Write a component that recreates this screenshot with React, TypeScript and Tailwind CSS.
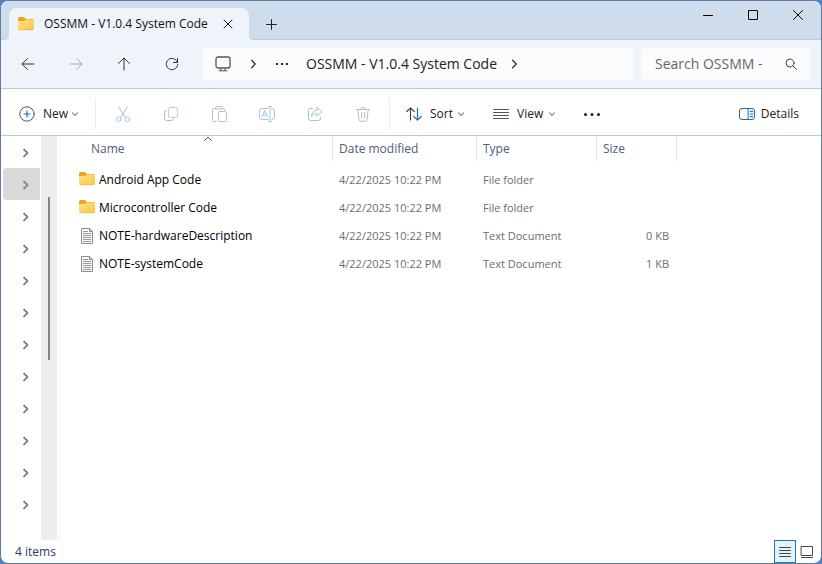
import type { ReactNode } from "react";

type IconProps = { className?: string };

function Svg({ size = 16, className = "", children }: { size?: number; className?: string; children: ReactNode }) {
  return (
    <svg
      width={size}
      height={size}
      viewBox={`0 0 ${size} ${size}`}
      fill="none"
      stroke="currentColor"
      strokeLinecap="round"
      strokeLinejoin="round"
      aria-hidden="true"
      className={`shrink-0 ${className}`}
    >
      {children}
    </svg>
  );
}

function FolderIcon({ className = "" }: IconProps) {
  return (
    <svg width="16" height="16" viewBox="0 0 16 16" aria-hidden="true" className={`shrink-0 ${className}`}>
      <defs>
        <linearGradient id="folderFront" x1="0" y1="0" x2="1" y2="1">
          <stop offset="0" stopColor="#ffe38f" />
          <stop offset="1" stopColor="#fbc740" />
        </linearGradient>
      </defs>
      <path d="M0 2.500Q0 1 1.500 1H5.200Q6 1 6.500 1.600L7.700 3H14.500Q16 3 16 4.500V9H0Z" fill="#eaa51c" />
      <path d="M0 6Q0 5 1 5H5.500Q6.200 5 6.800 4.500L7.300 4.200Q7.700 3.500 8.200 3.500H14.800Q16 3.500 16 4.700V12.600Q16 14 14.600 14H1.400Q0 14 0 12.600Z" fill="url(#folderFront)" />
      <path d="M.5 13.200Q.9 13.700 1.500 13.700H14.500Q15.200 13.700 15.500 13.200" fill="none" stroke="#e9b12f" strokeWidth=".6" />
    </svg>
  );
}

function TextFileIcon() {
  return (
    <svg width="16" height="16" viewBox="0 0 16 16" aria-hidden="true" className="shrink-0">
      <path d="M2.500 .5H10.500L13.500 3.500V15.500H2.500Z" fill="#fafafa" stroke="#8c8c8c" />
      <path d="M10.500 .5V3.500H13.500" fill="none" stroke="#8c8c8c" />
      <path d="M4 3.500H9M4 5.500H12M4 7.500H12M4 9.500H12M4 11.500H12M4 13.500H12" stroke="#9a9a9a" />
    </svg>
  );
}

function Chevron({ className = "" }: IconProps) {
  return (
    <Svg size={8} className={className}>
      <path d="M1.500 2.800 4 5.300 6.500 2.800" strokeWidth="1.200" />
    </Svg>
  );
}

function ChevronRight({ className = "" }: IconProps) {
  return (
    <Svg size={10} className={className}>
      <path d="M3.500 1.200 7.200 5 3.500 8.800" strokeWidth="1.200" />
    </Svg>
  );
}

function Dots() {
  return (
    <span className="flex gap-[3px]">
      <i className="size-[2px] bg-[#222]" />
      <i className="size-[2px] bg-[#222]" />
      <i className="size-[2px] bg-[#222]" />
    </span>
  );
}

const navIcons = [
  { label: "Back", tone: "text-[#333]", art: <path d="M14 8H2M7.500 2.500 2 8 7.500 13.500" /> },
  { label: "Forward", tone: "text-[#a6a9ad]", art: <path d="M2 8H14M8.500 2.500 14 8 8.500 13.500" /> },
  { label: "Up", tone: "text-[#333]", art: <path d="M8 14V2M2.500 7.500 8 2 13.500 7.500" /> },
  { label: "Refresh", tone: "text-[#333]", art: <path d="M13.500 6.500A5.700 5.700 0 1 0 13.700 8.500M13.500 2.500V6.500H9.500" /> },
];

const fileActions = [
  {
    label: "Cut",
    art: (
      <>
        <path d="M3.500 .8 10.300 11.200M12.500 .8 5.700 11.200" stroke="#b9bcc0" />
        <circle cx="3.700" cy="13.200" r="2.300" stroke="#9cc9e8" />
        <circle cx="12.300" cy="13.200" r="2.300" stroke="#9cc9e8" />
      </>
    ),
  },
  {
    label: "Copy",
    art: (
      <>
        <rect x="5.500" y="1.500" width="9" height="10" rx="2" stroke="#a9d0ea" />
        <path d="M3.500 4.500Q1.500 4.500 1.500 6.500V12Q1.500 14.500 4 14.500H8Q10.500 14.500 10.500 13" stroke="#b9bcc0" />
      </>
    ),
  },
  {
    label: "Paste",
    art: (
      <>
        <path d="M5 2.500H2.500Q1.500 2.500 1.500 3.500V14.500Q1.500 15.500 2.500 15.500H5M11 2.500H12.500Q13.500 2.500 13.500 3.500V4" stroke="#b9bcc0" />
        <rect x="4.500" y=".5" width="7" height="2.500" rx="1.200" stroke="#b9bcc0" />
        <rect x="7.500" y="5.500" width="8" height="10" rx="1.200" stroke="#9cc9e8" />
      </>
    ),
  },
  {
    label: "Rename",
    art: (
      <>
        <path d="M9 2.500H3Q.5 2.500 .5 5V11Q.5 13.500 3 13.500H9M13 2.500Q15.500 2.500 15.500 5V11Q15.500 13.500 13 13.500" stroke="#b9bcc0" />
        <path d="M3 11 5.700 4.500 8.400 11M4 9H7.400M11 .5V15.500M9.500 .5H12.500M9.500 15.500H12.500" stroke="#9cc9e8" />
      </>
    ),
  },
  {
    label: "Share",
    art: (
      <>
        <path d="M6 2.500H3.500Q1.500 2.500 1.500 4.500V12.500Q1.500 14.500 3.500 14.500H11.500Q13.500 14.500 13.500 12.500V11.500" stroke="#b9bcc0" />
        <path d="M10 1.500 15 5.800 10 10V7.600Q6.500 7.300 4.300 10.500Q4.800 4.700 10 4.200Z" stroke="#9cc9e8" />
      </>
    ),
  },
  {
    label: "Delete",
    art: (
      <path
        d="M1.500 3.500H14.500M5.700 3.500Q5.700 1 8 1Q10.300 1 10.300 3.500M2.800 3.500 4 13.500Q4.200 15.300 6 15.300H10Q11.800 15.300 12 13.500L13.200 3.500M6.500 6.500V12M9.500 6.500V12"
        stroke="#b9bcc0"
      />
    ),
  },
];

const files = [
  { name: "Android App Code", kind: "File folder", size: "" },
  { name: "Microcontroller Code", kind: "File folder", size: "" },
  { name: "NOTE-hardwareDescription", kind: "Text Document", size: "0 KB" },
  { name: "NOTE-systemCode", kind: "Text Document", size: "1 KB" },
];

const treeNodes = Array.from({ length: 12 }, (_, i) => i);

function TitleBar() {
  return (
    <header className="flex h-[39px] shrink-0 items-end border-b border-[#bccbdc] bg-[#cfdcec]">
      <div className="relative -mb-px ml-2 flex h-8 w-60 items-center rounded-t-lg bg-[#eff4fa] pl-[9px] pr-3">
        <span className="absolute -left-1 bottom-0 size-1 bg-[#eff4fa]"><span className="block size-full rounded-br bg-[#cfdcec]" /></span>
        <span className="absolute -right-1 bottom-0 size-1 bg-[#eff4fa]"><span className="block size-full rounded-bl bg-[#cfdcec]" /></span>
        <FolderIcon />
        <h1 className="ml-[10px] flex-1 whitespace-nowrap text-xs font-medium text-[#111]">OSSMM - V1.0.4 System Code</h1>
        <button type="button" aria-label="Close tab" className="flex size-[18px] items-center justify-center">
          <Svg size={10} className="text-[#222]">
            <path d="M1 1 9 9M9 1 1 9" />
          </Svg>
        </button>
      </div>
      <button type="button" aria-label="New tab" className="ml-[6px] flex h-[30px] w-8 items-center justify-center">
        <Svg size={11} className="text-[#222]">
          <path d="M5.500 .5V10.500M.5 5.500H10.500" />
        </Svg>
      </button>
      <div className="ml-auto flex self-start pr-px">
        <button type="button" aria-label="Minimize" className="flex h-7 w-[45px] items-center justify-center">
          <Svg size={10} className="text-black"><path d="M.5 5.500H9.500" /></Svg>
        </button>
        <button type="button" aria-label="Maximize" className="flex h-7 w-[45px] items-center justify-center">
          <Svg size={10} className="text-black"><rect x=".5" y=".5" width="9" height="9" rx=".5" /></Svg>
        </button>
        <button type="button" aria-label="Close" className="flex h-7 w-[45px] items-center justify-center">
          <Svg size={10} className="text-black"><path d="M.5 .5 9.500 9.500M9.500 .5 .5 9.500" /></Svg>
        </button>
      </div>
    </header>
  );
}

function NavigationBar() {
  return (
    <div className="flex h-[49px] shrink-0 items-center border-b border-[#bcc8d4] bg-[#eff4fa] px-[11px]">
      <nav className="flex gap-4" aria-label="History">
        {navIcons.map((n) => (
          <button key={n.label} type="button" aria-label={n.label} className={`flex size-8 items-center justify-center ${n.tone}`}>
            <Svg>{n.art}</Svg>
          </button>
        ))}
      </nav>
      <div className="ml-[14px] flex h-8 min-w-0 flex-1 items-center rounded bg-[#fbfcfe] pl-[13px]">
        <Svg className="text-[#555]">
          <rect x="1" y="1" width="14" height="11" rx="2" strokeWidth="1.300" />
          <path d="M6 12.500V14.500M10 12.500V14.500M4 14.800H12" />
        </Svg>
        <ChevronRight className="ml-[17px] text-[#222]" />
        <button type="button" aria-label="More folders" className="ml-3 flex h-6 w-6 items-center justify-center"><Dots /></button>
        <a href="#folder" className="ml-3 whitespace-nowrap text-sm text-[#222]">OSSMM - V1.0.4 System Code</a>
        <ChevronRight className="ml-3 text-[#222]" />
      </div>
      <div className="ml-2 flex h-8 w-[169px] items-center rounded bg-[#fbfcfe] pl-[14px] pr-3">
        <input type="search" aria-label="Search folder" placeholder="Search OSSMM -" className="min-w-0 flex-1 text-sm outline-none placeholder:text-[#666]" />
        <Svg size={14} className="text-[#444]">
          <circle cx="6" cy="6" r="4" />
          <path d="M9 9 12.500 12.500" />
        </Svg>
      </div>
    </div>
  );
}

function Toolbar() {
  return (
    <div className="flex h-[47px] shrink-0 items-center border-b border-[#bcc8d4] bg-white pl-[18px] pr-[22px] pt-[3px] text-xs text-[#1b1b1b]">
      <button type="button" className="flex items-center">
        <Svg className="text-[#555]">
          <circle cx="8" cy="8" r="7.200" />
          <path d="M8 5V11M5 8H11" stroke="#1673b9" strokeWidth="1.200" />
        </Svg>
        <span className="ml-2 w-7 text-left">New</span>
        <Chevron className="text-[#888]" />
      </button>
      <div className="ml-4 h-8 w-px bg-[#ececec]" />
      <div className="ml-[11px] flex gap-4">
        {fileActions.map((a) => (
          <button key={a.label} type="button" aria-label={a.label} disabled className="flex size-8 items-center justify-center">
            <Svg>{a.art}</Svg>
          </button>
        ))}
      </div>
      <div className="ml-[10px] h-8 w-px bg-[#ececec]" />
      <button type="button" className="ml-4 flex items-center">
        <Svg>
          <path d="M4.500 14V2M.8 5.500 4.500 1.800 8.200 5.500" stroke="#444" strokeWidth="1.200" />
          <path d="M11.500 2V14M7.800 10.500 11.500 14.200 15.200 10.500" stroke="#1673c4" strokeWidth="1.200" />
        </Svg>
        <span className="ml-2 w-[27px] text-left">Sort</span>
        <Chevron className="text-[#888]" />
      </button>
      <button type="button" className="ml-7 flex items-center">
        <Svg className="text-[#555]"><path d="M.5 3.500H15.500M.5 6.500H15.500M.5 9.500H15.500M.5 12.500H15.500" /></Svg>
        <span className="ml-2 w-[31px] text-left">View</span>
        <Chevron className="text-[#888]" />
      </button>
      <button type="button" aria-label="More options" className="ml-5 flex size-8 items-center justify-center">
        <Svg className="text-[#222]">
          <g fill="currentColor" stroke="none">
            <circle cx="1.500" cy="8.500" r="1.500" />
            <circle cx="8" cy="8.500" r="1.500" />
            <circle cx="14.500" cy="8.500" r="1.500" />
          </g>
        </Svg>
      </button>
      <button type="button" className="ml-auto flex items-center gap-[6px]">
        <Svg>
          <path d="M9.500 2.500H3Q.5 2.500 .5 5V11Q.5 13.500 3 13.500H9.500" stroke="#555" />
          <path d="M9.500 2.500H13Q15.500 2.500 15.500 5V11Q15.500 13.500 13 13.500H9.500ZM11.500 5.500H13.500M11.500 8H13.500M11.500 10.500H13.500" stroke="#1673c4" fill="#e6f2fb" />
        </Svg>
        <span>Details</span>
      </button>
    </div>
  );
}

function FolderTree() {
  return (
    <aside className="flex w-[59px] shrink-0 border-r border-[#f4f4f4]" aria-label="Folder tree">
      <ul className="flex-1 overflow-hidden pl-[2px]">
        {treeNodes.map((i) => (
          <li key={i}>
            <button
              type="button"
              aria-label={`Expand folder ${i + 1}`}
              className={`flex h-8 w-[37px] items-center justify-center rounded-l pl-2 pt-px ${i === 1 ? "bg-[#d9d9d9]" : ""}`}
            >
              <Svg size={10} className="text-[#858585]">
                <path d="M3 1.500 6.500 5 3 8.500" strokeWidth="1.800" />
              </Svg>
            </button>
          </li>
        ))}
      </ul>
      <div className="mr-[2px] flex w-4 justify-center bg-[#eeeeee] pt-[61px]">
        <div className="h-[163px] w-[2px] bg-[#858585]" />
      </div>
    </aside>
  );
}

function FileList() {
  return (
    <main className="min-w-0 flex-1 overflow-hidden text-xs">
      <table className="w-[617px] table-fixed border-separate border-spacing-0 text-left">
        <colgroup>
          <col className="w-[273px]" />
          <col className="w-36" />
          <col className="w-[120px]" />
          <col className="w-20" />
        </colgroup>
        <thead>
          <tr className="h-[25px] text-[#4c607a]">
            <th scope="col" aria-sort="ascending" className="relative border-r border-[#e5e5e5] p-0 pl-[31px] font-normal">
              Name
              <Svg size={10} className="absolute left-[143px] top-[-2px] text-[#555]"><path d="M1.500 6.500 5 3 8.500 6.500" /></Svg>
            </th>
            <th scope="col" className="border-r border-[#e5e5e5] p-0 pl-[6px] font-normal">Date modified</th>
            <th scope="col" className="border-r border-[#e5e5e5] p-0 pl-[6px] font-normal">Type</th>
            <th scope="col" className="border-r border-[#e5e5e5] p-0 pl-[6px] font-normal">Size</th>
          </tr>
        </thead>
        <tbody className="text-[11px] text-[#6d6d6d] before:block before:h-[5px]">
          {files.map((f) => (
            <tr key={f.name} className="h-7">
              <td className="p-0 pl-[19px] text-xs text-black">
                <span className="flex items-center gap-1">
                  {f.kind === "File folder" ? <FolderIcon className="mb-[2px]" /> : <TextFileIcon />}
                  {f.name}
                </span>
              </td>
              <td className="p-0 pl-[6px]">4/22/2025 10:22 PM</td>
              <td className="p-0 pl-[6px]">{f.kind}</td>
              <td className="p-0 pr-2 text-right">{f.size}</td>
            </tr>
          ))}
        </tbody>
      </table>
    </main>
  );
}

function StatusBar() {
  return (
    <footer className="flex h-[23px] shrink-0 items-center pl-[14px] pr-[7px] text-xs text-[#273c68]">
      <span>4 items</span>
      <span className="ml-[6px] mr-auto h-3 w-px bg-[#f0f0f0]" />
      <button type="button" aria-label="Details view" aria-pressed="true" className="flex h-[23px] w-[22px] items-center justify-center border border-[#2279b8] bg-[#e3f2fb] text-[#444]">
        <Svg size={14}><path d="M1.500 2.500H12.500M1.500 5.500H12.500M1.500 8.500H12.500M1.500 11.500H12.500" /></Svg>
      </button>
      <button type="button" aria-label="Large icons view" className="ml-1 flex h-[23px] w-[14px] items-center justify-center text-[#444]">
        <Svg size={14}><path d="M1.500 1.500H12.500V10.500H1.500ZM1.500 12.500H12.500" /></Svg>
      </button>
    </footer>
  );
}

export default function App() {
  return (
    <div className="h-screen bg-[#4b83c8] font-['Open_Sans','Noto_Sans',sans-serif]">
      <div className="flex h-full flex-col overflow-hidden rounded-lg border border-[#5f7ba2] bg-white">
        <TitleBar />
        <NavigationBar />
        <Toolbar />
        <div className="flex min-h-0 flex-1">
          <FolderTree />
          <FileList />
        </div>
        <StatusBar />
      </div>
    </div>
  );
}
